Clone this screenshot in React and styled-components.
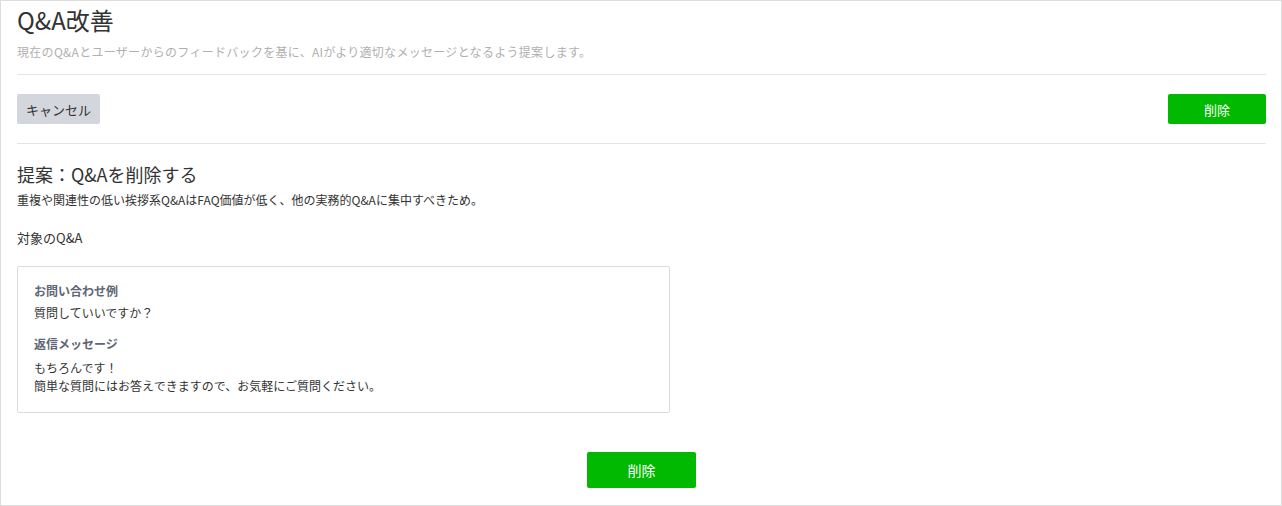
import styled, { createGlobalStyle } from "styled-components";

const GlobalStyle = createGlobalStyle`
    * { box-sizing: border-box; }
    body {
        margin: 0;
        background: #ffffff;
        font-family: "Noto Sans CJK JP", "Noto Sans", sans-serif;
        color: #333333;
    }
`
const Page = styled.div`
    width: 1282px;
    height: 506px;
    border: 1px solid #dddddd;
    padding: 2px 15px 0 16px;
    display: flex;
    flex-direction: column;
`
const Title = styled.h1`
    margin: 0;
    font-size: 24px;
    font-weight: 400;
    line-height: 34px;
    color: #333333;
`
const Lead = styled.p`
    margin: 6px 0 0;
    font-size: 12px;
    line-height: 18px;
    letter-spacing: 0.3px;
    color: #b0b0b0;
`
const Divider = styled.hr`
    width: 100%;
    margin: ${p => p.$top}px 0 0;
    border: none;
    border-top: 1px solid #e4e4e4;
`
const Toolbar = styled.div`
    display: flex;
    justify-content: space-between;
    align-items: center;
    margin-top: 19px;
`
const Button = styled.button`
    border: none;
    border-radius: 2px;
    font-family: inherit;
    font-size: ${p => p.$size || 13}px;
    cursor: pointer;
    background: ${p => p.$primary ? "#00b900" : "#d3d6dc"};
    color: ${p => p.$primary ? "#ffffff" : "#333333"};
    width: ${p => p.$width}px;
    height: ${p => p.$height}px;
    padding: 0;
`
const Heading = styled.h2`
    margin: 17px 0 0;
    font-size: 18px;
    font-weight: 400;
    line-height: 26px;
    color: #333333;
`
const Text = styled.p`
    margin: ${p => p.$top || 0}px 0 0;
    font-size: ${p => p.$size || 12}px;
    line-height: 18px;
    color: #333333;
`
const Card = styled.div`
    width: 653px;
    margin-top: 19px;
    border: 1px solid #dcdcdc;
    border-radius: 2px;
    padding: 15px 16px 17px;
    display: flex;
    flex-direction: column;
`
const Label = styled.div`
    margin-top: ${p => p.$top || 0}px;
    font-size: 12px;
    font-weight: 700;
    line-height: 18px;
    color: #5f6675;
`
const Footer = styled.div`
    display: flex;
    justify-content: center;
    margin-top: 39px;
`

export default function App() {
    return (
        <>
            <GlobalStyle />
            <Page>
                <Title>Q&amp;A改善</Title>
                <Lead>現在のQ&amp;Aとユーザーからのフィードバックを基に、AIがより適切なメッセージとなるよう提案します。</Lead>
                <Divider $top={13} />
                <Toolbar>
                    <Button $width={83} $height={30}>キャンセル</Button>
                    <Button $primary $width={98} $height={30}>削除</Button>
                </Toolbar>
                <Divider $top={19} />
                <Heading>提案：Q&amp;Aを削除する</Heading>
                <Text $top={4}>重複や関連性の低い挨拶系Q&amp;AはFAQ価値が低く、他の実務的Q&amp;Aに集中すべきため。</Text>
                <Text $top={20} $size={13}>対象のQ&amp;A</Text>
                <Card>
                    <Label>お問い合わせ例</Label>
                    <Text $top={4}>質問していいですか？</Text>
                    <Label $top={13}>返信メッセージ</Label>
                    <Text $top={6}>もちろんです！<br />簡単な質問にはお答えできますので、お気軽にご質問ください。</Text>
                </Card>
                <Footer>
                    <Button $primary $width={109} $height={36} $size={14}>削除</Button>
                </Footer>
            </Page>
        </>
    );
}
